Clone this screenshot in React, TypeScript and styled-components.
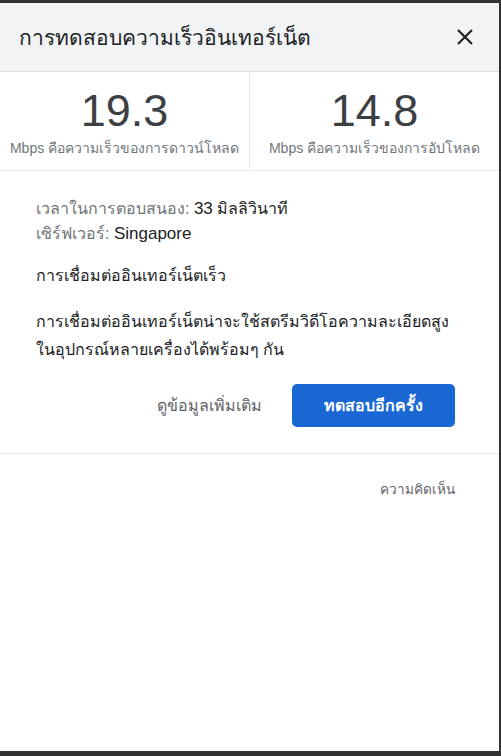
import React from "react";
import styled, { createGlobalStyle } from "styled-components";

const Global = createGlobalStyle`
  html, body { margin: 0; padding: 0; background: #323232; }
  body { font-family: Arial, "Liberation Sans", "Noto Sans", sans-serif; }
  #root { padding: 3px 2px 5px 0; }
`;

const Panel = styled.div`
  background: #fff;
  height: 748px;
  display: flex;
  flex-direction: column;
`;

const Header = styled.div`
  background: #f1f3f4;
  height: 68px;
  border-bottom: 1px solid #dadce0;
  display: flex;
  align-items: center;
  justify-content: space-between;
  padding: 0 24px 0 19px;
`;

const Title = styled.h1`
  margin: 0;
  font-size: 21px;
  font-weight: 400;
  color: #202124;
`;

const Close = styled.button`
  border: 0;
  background: none;
  padding: 0;
  width: 20px;
  height: 20px;
  display: flex;
  align-items: center;
  justify-content: center;
  cursor: pointer;
`;

const Stats = styled.div`
  display: grid;
  grid-template-columns: 249px 1fr;
  border-bottom: 1px solid #e8eaed;
  height: 98px;
`;

const Stat = styled.div<{ $divider?: boolean }>`
  display: flex;
  flex-direction: column;
  align-items: center;
  padding-top: 17px;
  border-left: ${(p) => (p.$divider ? "1px solid #e8eaed" : "none")};
`;

const Value = styled.div`
  font-size: 45px;
  line-height: 44px;
  color: #3c4043;
`;

const Label = styled.div`
  font-size: 14px;
  color: #70757a;
  margin-top: 4px;
  white-space: nowrap;
`;

const Body = styled.div`
  padding: 25px 44px 26px 36px;
  border-bottom: 1px solid #e8eaed;
  font-size: 16px;
  color: #202124;
`;

const Line = styled.div`
  line-height: 25px;
`;

const Muted = styled.span`
  color: #70757a;
`;

const Latin = styled.span`
  font-size: 17px;
`;

const Heading = styled.p`
  margin: 16px 0 0;
  line-height: 28px;
`;

const Para = styled.p`
  margin: 18px 0 0;
  line-height: 28px;
  white-space: nowrap;
`;

const Actions = styled.div`
  display: flex;
  justify-content: flex-end;
  align-items: center;
  gap: 30px;
  margin-top: 20px;
`;

const LinkButton = styled.button`
  border: 0;
  background: none;
  font: inherit;
  font-size: 16px;
  color: #5f6368;
  padding: 0;
`;

const Primary = styled.button`
  border: 0;
  background: #1967d2;
  color: #fff;
  font: inherit;
  font-size: 16px;
  font-weight: 700;
  width: 163px;
  height: 43px;
  border-radius: 5px;
`;

const Footer = styled.div`
  display: flex;
  justify-content: flex-end;
  padding: 24px 44px 0 0;
  font-size: 13.5px;
  color: #5f6368;
`;

export default function App() {
  return (
    <>
      <Global />
      <Panel>
        <Header>
          <Title>การทดสอบความเร็วอินเทอร์เน็ต</Title>
          <Close aria-label="close">
            <svg width="16" height="16" viewBox="0 0 16 16">
              <path d="M1 1L15 15M15 1L1 15" stroke="#202124" strokeWidth="2.2" />
            </svg>
          </Close>
        </Header>
        <Stats>
          <Stat>
            <Value>19.3</Value>
            <Label>Mbps คือความเร็วของการดาวน์โหลด</Label>
          </Stat>
          <Stat $divider>
            <Value>14.8</Value>
            <Label>Mbps คือความเร็วของการอัปโหลด</Label>
          </Stat>
        </Stats>
        <Body>
          <Line>
            <Muted>เวลาในการตอบสนอง:</Muted> <Latin>33</Latin> มิลลิวินาที
          </Line>
          <Line>
            <Muted>เซิร์ฟเวอร์:</Muted> <Latin>Singapore</Latin>
          </Line>
          <Heading>การเชื่อมต่ออินเทอร์เน็ตเร็ว</Heading>
          <Para>
            การเชื่อมต่ออินเทอร์เน็ตน่าจะใช้สตรีมวิดีโอความละเอียดสูง
            <br />
            ในอุปกรณ์หลายเครื่องได้พร้อมๆ กัน
          </Para>
          <Actions>
            <LinkButton>ดูข้อมูลเพิ่มเติม</LinkButton>
            <Primary>ทดสอบอีกครั้ง</Primary>
          </Actions>
        </Body>
        <Footer>ความคิดเห็น</Footer>
      </Panel>
    </>
  );
}
